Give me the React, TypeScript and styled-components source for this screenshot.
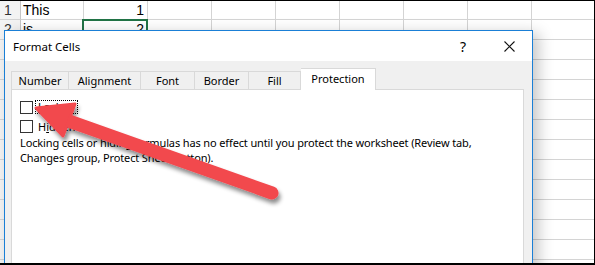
import React from "react";
import styled, { createGlobalStyle } from "styled-components";

const GlobalStyle = createGlobalStyle`
  html, body {
    margin: 0;
    padding: 0;
    background: #ffffff;
  }
`;

const UI_FONT = `"Segoe UI", "Noto Sans", "Open Sans", sans-serif`;
const SHEET_FONT = `"Liberation Sans", Arial, sans-serif`;

const COLUMNS = 9;
const ROWS = 14;

const sheetData: Record<number, [string, string]> = {
  1: ["This", "1"],
  2: ["is", "2"],
};

const tabs = [
  { label: "Number", width: 58 },
  { label: "Alignment", width: 72 },
  { label: "Font", width: 54 },
  { label: "Border", width: 54 },
  { label: "Fill", width: 52 },
  { label: "Protection", width: 75 },
];

export default function App() {
  const rows = [];
  for (let r = 1; r <= ROWS; r++) {
    const data = sheetData[r];
    rows.push(<RowHeader key={`h${r}`}>{r}</RowHeader>);
    for (let c = 0; c < COLUMNS; c++) {
      let text = "";
      if (data && c === 0) text = data[0];
      if (data && c === 1) text = data[1];
      rows.push(
        <Cell key={`${r}-${c}`} numeric={c === 1} selected={r === 2 && c === 1}>
          {text}
        </Cell>
      );
    }
  }

  return (
    <>
      <GlobalStyle />
      <Frame>
        <Sheet>{rows}</Sheet>

        <Dialog>
          <TitleBar>
            <Title>Format Cells</Title>
            <TitleButtons>
              <HelpButton>?</HelpButton>
              <CloseButton>
                <svg width="11" height="11" viewBox="0 0 11 11">
                  <path d="M0.5 0.5 L10.5 10.5 M10.5 0.5 L0.5 10.5" stroke="#111" strokeWidth="1.1" />
                </svg>
              </CloseButton>
            </TitleButtons>
          </TitleBar>
          <DialogBody>
            <TabStrip>
              {tabs.map((t, i) => (
                <Tab key={t.label} width={t.width} active={i === tabs.length - 1}>
                  {t.label}
                </Tab>
              ))}
            </TabStrip>
            <Panel>
              <CheckRow>
                <CheckBox />
                <FocusLabel>
                  <u>L</u>ocked
                </FocusLabel>
              </CheckRow>
              <CheckRow>
                <CheckBox />
                <PlainLabel>
                  H<u>i</u>dden
                </PlainLabel>
              </CheckRow>
              <Note>
                <NoteLine>
                  Locking cells or hiding formulas has no effect until you protect the worksheet (Review tab,
                </NoteLine>
                <NoteLine>Changes group, Protect Sheet button).</NoteLine>
              </Note>
            </Panel>
          </DialogBody>
        </Dialog>

        <ArrowLayer width="595" height="265" viewBox="0 0 595 265">
          <defs>
            <filter id="arrowShadow" x="-20%" y="-20%" width="140%" height="160%">
              <feDropShadow dx="2" dy="4" stdDeviation="2.2" floodColor="#000" floodOpacity="0.45" />
            </filter>
          </defs>
          <g filter="url(#arrowShadow)">
            <line x1="272" y1="193" x2="66" y2="120" stroke="#f2484e" strokeWidth="13" strokeLinecap="round" />
            <polygon
              points="36,108 75,104 63,136"
              fill="#f2484e"
              stroke="#f2484e"
              strokeWidth="3"
              strokeLinejoin="round"
            />
          </g>
        </ArrowLayer>
      </Frame>
    </>
  );
}

const Frame = styled.div`
  position: relative;
  width: 595px;
  height: 265px;
  box-sizing: border-box;
  overflow: hidden;
  border-top: 1px solid #000;
  border-right: 1px solid #000;
  border-bottom: 2px solid #000;
  background: #fff;
`;

const Sheet = styled.div`
  display: grid;
  grid-template-columns: 21px 63px repeat(8, 64px);
  grid-template-rows: 19px repeat(13, 20px);
  font-family: ${SHEET_FONT};
  font-size: 14px;
  color: #000;
`;

const RowHeader = styled.div`
  box-sizing: border-box;
  border-right: 1px solid #c6c6c6;
  border-bottom: 1px solid #d4d4d4;
  background: #f3f3f3;
  padding-left: 4px;
  line-height: 19px;
  color: #333;
  white-space: nowrap;
`;

interface CellProps {
  readonly numeric?: boolean;
  readonly selected?: boolean;
}
const Cell = styled.div<CellProps>`
  position: relative;
  box-sizing: border-box;
  border-right: 1px solid #d4d4d4;
  border-bottom: 1px solid #d4d4d4;
  padding: 0 3px 0 2px;
  line-height: 19px;
  text-align: ${({ numeric }) => (numeric ? "right" : "left")};
  white-space: nowrap;

  &::after {
    content: "";
    display: ${({ selected }) => (selected ? "block" : "none")};
    position: absolute;
    left: -2px;
    top: -1px;
    right: -1px;
    bottom: -1px;
    border: 2px solid #217346;
  }
`;

const Dialog = styled.div`
  position: absolute;
  left: 4px;
  top: 29px;
  width: 529px;
  height: 250px;
  box-sizing: border-box;
  border: 1px solid #1a7fd6;
  background: #f0f0f0;
  box-shadow: 6px 3px 14px rgba(0, 0, 0, 0.22);
  display: flex;
  flex-direction: column;
  font-family: ${UI_FONT};
  font-size: 11px;
  color: #000;
  z-index: 2;
`;

const TitleBar = styled.div`
  height: 30px;
  flex-shrink: 0;
  background: #fff;
  display: flex;
  align-items: center;
  justify-content: space-between;
  padding-left: 8px;
`;

const Title = styled.span`
  font-size: 11.5px;
`;

const TitleButtons = styled.div`
  display: flex;
  align-items: center;
  height: 100%;
`;

const HelpButton = styled.span`
  width: 46px;
  text-align: center;
  font-size: 14px;
`;

const CloseButton = styled.span`
  width: 46px;
  display: flex;
  justify-content: center;
  align-items: center;
`;

const DialogBody = styled.div`
  flex: 1;
  display: flex;
  flex-direction: column;
  padding: 8px 8px 0 6px;
`;

const TabStrip = styled.div`
  display: flex;
  align-items: flex-end;
  height: 21px;
  position: relative;
  z-index: 1;
  margin-bottom: -1px;
`;

interface TabProps {
  readonly width: number;
  readonly active?: boolean;
}
const Tab = styled.div<TabProps>`
  box-sizing: border-box;
  width: ${({ width }) => width}px;
  height: ${({ active }) => (active ? 22 : 19)}px;
  border-top: 1px solid #d9d9d9;
  border-right: 1px solid #d9d9d9;
  border-bottom: ${({ active }) => (active ? "none" : "1px solid #d9d9d9")};
  background: ${({ active }) => (active ? "#fff" : "#f0f0f0")};
  display: flex;
  align-items: center;
  justify-content: center;
  padding-bottom: ${({ active }) => (active ? 2 : 0)}px;
  white-space: nowrap;

  &:first-child {
    border-left: 1px solid #d9d9d9;
  }
`;

const Panel = styled.div`
  flex: 1;
  background: #fff;
  border: 1px solid #d9d9d9;
  padding: 10px 8px;
  display: flex;
  flex-direction: column;
`;

const CheckRow = styled.div`
  display: flex;
  align-items: center;
  height: 14px;
  margin-bottom: 5px;
`;

const CheckBox = styled.span`
  width: 13px;
  height: 13px;
  box-sizing: border-box;
  border: 1px solid #333;
  background: #fff;
  margin-right: 2px;
`;

const FocusLabel = styled.span`
  border: 1px dotted #000;
  padding: 0 2px;
  line-height: 12px;
`;

const PlainLabel = styled.span`
  padding: 0 3px;
`;

const Note = styled.div`
  margin: -3px 0 0;
  line-height: 15px;
  letter-spacing: -0.13px;
`;

const NoteLine = styled.div`
  white-space: nowrap;
`;

const ArrowLayer = styled.svg`
  position: absolute;
  left: 0;
  top: -1px;
  z-index: 3;
  pointer-events: none;
`;
